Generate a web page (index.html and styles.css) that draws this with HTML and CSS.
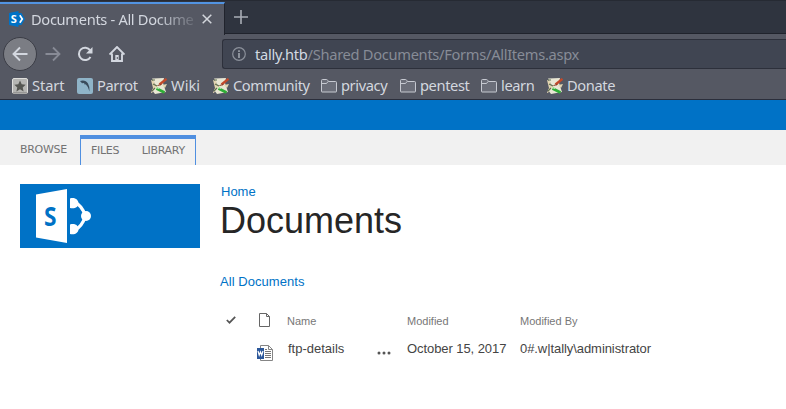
FILE: index.html
```
<!DOCTYPE html>
<html lang="en">
<head>
<meta charset="utf-8">
<title>Documents - All Documents</title>
<link rel="stylesheet" href="styles.css">
</head>
<body>
<svg class="defs" aria-hidden="true">
  <symbol id="folder" viewBox="0 0 16 16"><path d="M.5 13.500V2.500q0-1 1-1H5.500q.8 0 1.200.7l.7 1.300H14.500q1 0 1 1v9q0 .5-.5.5H1Q.5 14 .5 13.500z" fill="#6b6e79" stroke="#c6c9d1"/><path d="M1 5.500h4.500l1.500-2" fill="none" stroke="#c6c9d1"/></symbol>
  <symbol id="note" viewBox="0 0 16 16"><path d="M1 .5l12-.5-1 5 3 9-11 2-3-4 4-4z" fill="#e9e7d4"/><path d="M0 2l3 1 1 4 3 1-4 3-2 4H0l2-5zM11 7l5-1-2 4z" fill="#e3d5b1"/><path d="M1 2h3M2 6l4 2M1 13l3-3" stroke="#61704f" stroke-width="1.200"/><path d="M8.500 6.500L15.500.8" stroke="#c2492a" stroke-width="2.300"/><path d="M6.500 7.500l4-1" stroke="#8b3925"/><path d="M5.500 10.500l8 4" stroke="#2fae37" stroke-width="2.800"/><path d="M5 9.500l3 1" stroke="#c5efb5"/></symbol>
</svg>
<div class="browser">
  <div class="tabs">
    <div class="tab">
      <svg class="favicon" viewBox="0 0 16 16"><path d="M0 2L9.500 0v16L0 14z" fill="#0072c6"/><path d="M9 2h3.500L16 8l-3.500 6H9z" fill="#0072c6"/><path d="M10.800 4.200L13.300 8l-2.500 3.800" fill="none" stroke="#fff" stroke-width="1.700"/><text x="1.800" y="12" class="favicon-letter">S</text></svg>
      <span class="tab-title">Documents - All Docume</span>
      <svg class="close" viewBox="0 0 10 10"><path d="M.7.700l8.600 8.600M9.300.7L.7 9.300" stroke="#d3d6dc" stroke-width="1.500"/></svg>
    </div>
    <svg class="plus" viewBox="0 0 14 14"><path d="M7 0v14M0 7h14" stroke="#a9adb6" stroke-width="1.600"/></svg>
  </div>
  <div class="toolbar">
    <div class="back"><svg viewBox="0 0 16 16"><path d="M15.500 8H1.500M8 1.500L1.500 8 8 14.500" fill="none" stroke="#d3d7df" stroke-width="1.900"/></svg></div>
    <svg class="forward" viewBox="0 0 16 16"><path d="M.5 8h14M8 1.500L14.500 8 8 14.500" fill="none" stroke="#888b96" stroke-width="1.800"/></svg>
    <svg class="reload" viewBox="0 0 16 16"><path d="M13.200 4.300A6.200 6.200 0 1 0 13.500 11" fill="none" stroke="#d3d7df" stroke-width="2"/><path d="M15.500 1v6.500H9z" fill="#d3d7df"/></svg>
    <svg class="house" viewBox="0 0 16 16"><path d="M.5 8.500L8 1l7.500 7.500M3 7.500V15h10V7.500" fill="none" stroke="#d3d7df" stroke-width="1.900"/><path d="M6.300 15V9h3.400v6" fill="#d3d7df"/><path d="M8.300 11v2" stroke="#555863"/></svg>
    <div class="address">
      <svg class="info" viewBox="0 0 14 14"><circle cx="7" cy="7" r="6.300" fill="none" stroke="#8c919b" stroke-width="1.200"/><path d="M7 6v5M7 3.200v1.700" stroke="#9a9fa8" stroke-width="1.700"/></svg>
      <span class="url"><b>tally.htb</b>/Shared Documents/Forms/AllItems.aspx</span>
    </div>
  </div>
  <div class="bookmarks">
    <div class="mark start"><svg viewBox="0 0 16 16"><rect x=".5" y=".5" width="15" height="15" rx="1.500" fill="#b5b5b3" stroke="#dededc"/><path d="M1 15h14" stroke="#777"/><path d="M8 2.500l1.700 3.800 4 .4-3 2.700.9 4L8 11.300l-3.600 2.100.9-4-3-2.700 4-.4z" fill="#555652"/></svg><span>Start</span></div>
    <div class="mark parrot"><svg viewBox="0 0 16 16"><rect width="16" height="16" rx="2" fill="#8fb4c8"/><path d="M3 3C6 1.800 9.500 2.500 11 5.500q2 3.500 1.500 8L10.800 9 8.500 6 8 7 7 5 5 5.200z" fill="#3a4c5b"/></svg><span>Parrot</span></div>
    <div class="mark wiki"><svg><use href="#note"/></svg><span>Wiki</span></div>
    <div class="mark community"><svg><use href="#note"/></svg><span>Community</span></div>
    <div class="mark privacy"><svg><use href="#folder"/></svg><span>privacy</span></div>
    <div class="mark pentest"><svg><use href="#folder"/></svg><span>pentest</span></div>
    <div class="mark learn"><svg><use href="#folder"/></svg><span>learn</span></div>
    <div class="mark"><svg><use href="#note"/></svg><span>Donate</span></div>
  </div>
</div>
<div class="suite"></div>
<nav class="ribbon">
  <span class="browse">BROWSE</span>
  <div class="group"><span>FILES</span><span>LIBRARY</span></div>
</nav>
<main>
  <div class="logo"><svg viewBox="0 0 56 54"><path d="M0 5.500L31 0v54L0 48.500z" fill="#fff"/><text class="logo-letter" transform="translate(8 37) scale(.84 1)">S</text><path d="M34 9.500c5-1.500 8.500 1.500 8.500 5 0 3.500-3.500 5.500-8.500 4.500zM34 35.500c5-1.500 8.500 1 8.500 4.500 0 4-3.500 6-8.500 5z" fill="#fff"/><path d="M39 13.500q7 3 10.500 13.500Q46 37.500 39 41" fill="none" stroke="#fff" stroke-width="3.200"/><circle cx="50" cy="27" r="5" fill="#fff"/></svg></div>
  <div class="content">
    <a class="home">Home</a>
    <h1>Documents</h1>
    <a class="view">All Documents</a>
    <div class="list">
      <div class="head"><svg class="check" viewBox="0 0 10 8"><path d="M.8 4l2.700 2.700L9.200.8" fill="none" stroke="#555" stroke-width="1.700"/></svg></div>
      <div class="head"><svg class="page" viewBox="0 0 11 14"><path d="M.5.500h7l3 3v10H.5zM7.500.5v3h3" fill="#fff" stroke="#666"/></svg></div>
      <div class="head">Name</div><div></div><div class="head">Modified</div><div class="head">Modified By</div>
      <div></div>
      <div class="cell"><svg class="word" viewBox="0 0 16 16"><path d="M3.500.5h8l4 4v11h-12zM11.500.5v4h4" fill="#fff" stroke="#858585"/><path d="M8 4.500h2M8 6.500h6M8 8.500h6M8 10.500h6M8 12.500h6" stroke="#777"/><path d="M0 3h7v11H0z" fill="#2b579a"/><path d="M1 6l1.200 4.200L3.500 7l1.200 3.200L6 6" fill="none" stroke="#fff" stroke-width="1.200"/></svg></div>
      <div class="cell name">ftp-details</div>
      <div class="cell"><svg class="dots" viewBox="0 0 14 4"><circle cx="2" cy="2" r="1.500"/><circle cx="7" cy="2" r="1.500"/><circle cx="12" cy="2" r="1.500"/></svg></div>
      <div class="cell date">October 15, 2017</div>
      <div class="cell author">0#.w|tally\administrator</div>
    </div>
  </div>
</main>
</body>
</html>
```
FILE: styles.css
```
* { box-sizing: border-box; }
body { margin: 0; width: 786px; height: 409px; overflow: hidden; background: #fff; font-family: "Liberation Sans", sans-serif; }
svg { display: block; flex: none; }
.defs { display: none; }
.browser { height: 100px; background: #555863; border-bottom: 1px solid #2b2e3b; font-family: "Noto Sans", sans-serif; font-size: 14.67px; letter-spacing: -.33px; color: #d3d7df; }
.tabs { display: flex; height: 34px; background: #2f343f; border-top: 1px solid #262a33; box-shadow: inset 0 -1px #20232c; }
.tab { display: flex; align-items: center; width: 225px; height: 33px; margin-top: 1px; padding: 0 0 2px 9px; border-top: 2px solid #5294e2; border-right: 1px solid #20232c; background: #555863; }
.favicon { width: 16px; height: 16px; }
.favicon-letter { font: bold 11px "Open Sans", sans-serif; letter-spacing: 0; fill: #fff; }
.tab-title { width: 163px; margin-left: 6px; white-space: nowrap; line-height: 20px; -webkit-mask-image: linear-gradient(to right, #000 125px, rgba(0, 0, 0, .15) 163px); mask-image: linear-gradient(to right, #000 125px, rgba(0, 0, 0, .15) 163px); }
.close { width: 10px; height: 10px; margin-left: 8px; }
.plus { width: 14px; height: 14px; margin: 9px 0 0 9px; }
.toolbar { display: flex; align-items: center; height: 39px; padding-left: 3px; }
.back { display: flex; align-items: center; justify-content: center; width: 34px; height: 34px; border: 1px solid #3b3d46; border-radius: 50%; background: #7b7d84; }
.back svg { width: 16px; height: 16px; }
.forward { width: 16px; height: 16px; margin-left: 8px; }
.reload { width: 16px; height: 16px; margin-left: 16px; }
.house { width: 16px; height: 16px; margin-left: 16px; }
.address { display: flex; align-items: center; flex: 1; height: 30px; margin-left: 97px; padding-left: 9px; border: 1px solid #2d303b; border-right: 0; border-radius: 3px 0 0 3px; background: #404552; color: #878c97; }
.info { width: 14px; height: 14px; }
.url { margin-left: 9px; white-space: nowrap; letter-spacing: -.3px; }
.url b { font-weight: 400; color: #d3dae3; }
.bookmarks { display: flex; height: 25px; padding-left: 12px; letter-spacing: -.4px; }
.mark { display: flex; align-items: center; gap: 4px; height: 25px; white-space: nowrap; }
.mark span { padding-bottom: 1px; }
.mark svg { width: 16px; height: 16px; }
.start { width: 65px; letter-spacing: -.1px; }
.parrot { width: 74px; }
.wiki { width: 62px; letter-spacing: 0; }
.community { width: 108px; }
.privacy { width: 79px; }
.pentest { width: 81px; }
.learn { width: 66px; }
.suite { height: 30px; background: #0072c6; }
.ribbon { display: flex; height: 35px; padding-left: 20px; background: #f1f1f1; font: 11px/30px "DejaVu Sans", sans-serif; letter-spacing: -.3px; color: #737373; }
.browse { width: 60px; padding-top: 5px; }
.group { display: flex; gap: 22.500px; width: 116px; height: 30px; margin-top: 5px; padding-left: 10px; border: 1px solid #4f8fe0; border-top-width: 4px; border-bottom: 0; line-height: 23px; }
main { display: flex; padding: 19px 0 0 20px; }
.logo { width: 180px; height: 64px; padding: 5px 0 0 16px; background: #0072c6; }
.logo svg { width: 56px; height: 54px; }
.logo-letter { font: bold 27px "Open Sans", sans-serif; fill: #0072c6; }
.content { margin-left: 20px; width: 540px; }
.home { display: block; padding-left: 1px; font-size: 13px; line-height: 15px; color: #0072c6; }
h1 { margin: 0; font-weight: 400; font-size: 36px; line-height: 43px; color: #262626; }
.view { display: block; margin-top: 32px; font-size: 13px; line-height: 15px; letter-spacing: .05px; color: #0072c6; }
.list { display: grid; grid-template-columns: 37px 30px 90px 30px 113px 1fr; grid-template-rows: 28px 32px; margin-top: 18px; }
.head { display: flex; align-items: center; font-size: 11px; color: #777; }
.check { width: 10px; height: 8px; margin: 0 0 2px 6px; }
.page { width: 11px; height: 14px; margin: 0 0 2px 2px; }
.cell { display: flex; align-items: center; font-size: 13px; color: #444; white-space: nowrap; padding-bottom: 5px; }
.name { padding-left: 1px; }
.date, .author { letter-spacing: -.07px; }
.word { width: 16px; height: 16px; margin-top: 9px; }
.dots { width: 14px; height: 4px; margin-top: 9px; fill: #555; }
```
